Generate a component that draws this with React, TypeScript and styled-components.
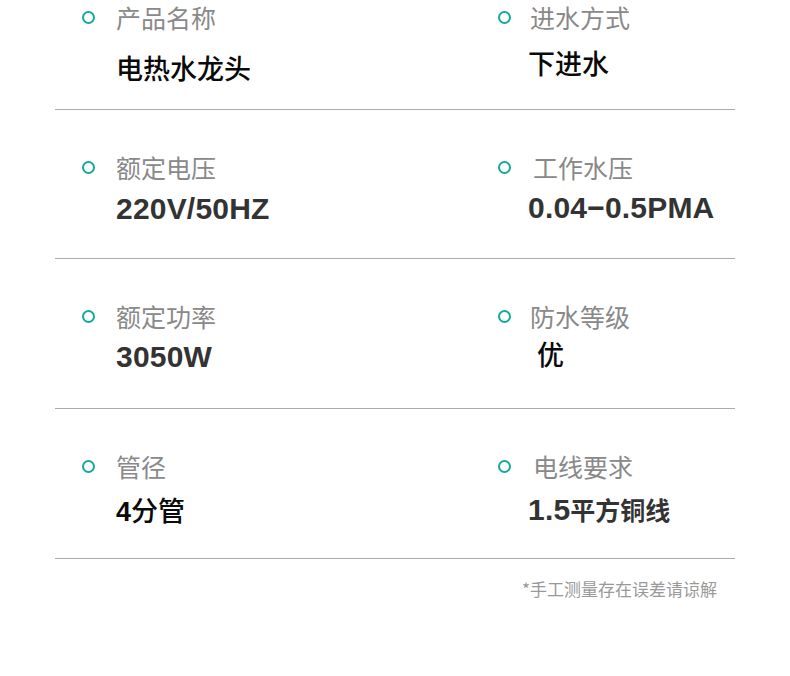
import React from "react";
import styled, { createGlobalStyle } from "styled-components";

const Global = createGlobalStyle`
  html, body { margin: 0; padding: 0; background: #fff; }
  body { font-family: "Liberation Sans", "Noto Sans CJK SC", sans-serif; }
`;

const Page = styled.div`
  width: 790px;
  height: 676px;
  background: #fff;
  overflow: hidden;
  padding-left: 55px;
  box-sizing: border-box;
`;

const Table = styled.div`
  width: 680px;
  display: flex;
  flex-direction: column;
`;

const Row = styled.div<{ $h: number; $pad: number }>`
  display: grid;
  grid-template-columns: 416px 1fr;
  height: ${(p) => p.$h}px;
  padding-top: ${(p) => p.$pad}px;
  box-sizing: border-box;
  border-bottom: 1px solid #ababab;
`;

const Cell = styled.div`
  padding-left: 27px;
  display: flex;
  flex-direction: column;
`;

const Head = styled.div`
  display: flex;
  align-items: center;
  height: 30px;
`;

const Dot = styled.span`
  width: 13px;
  height: 13px;
  border: 2.5px solid #14a99b;
  border-radius: 50%;
  box-sizing: border-box;
  flex: none;
`;

const Label = styled.span<{ $dx: number }>`
  margin-left: ${(p) => 21 + p.$dx}px;
  font-family: "Noto Sans CJK SC", sans-serif;
  font-size: 25px;
  line-height: 30px;
  color: #898989;
  white-space: nowrap;
`;

const Value = styled.div<{ $dx: number; $gap: number; $tone: "black" | "dark" }>`
  margin-left: ${(p) => 34 + p.$dx}px;
  margin-top: ${(p) => p.$gap}px;
  height: 40px;
  line-height: 40px;
  font-family: "Liberation Sans", "Noto Sans CJK SC", sans-serif;
  font-weight: ${(p) => (p.$tone === "dark" ? 700 : 500)};
  font-size: ${(p) => (p.$tone === "dark" ? 30 : 27)}px;
  letter-spacing: ${(p) => (p.$tone === "dark" ? 0.2 : 0)}px;
  color: ${(p) => (p.$tone === "dark" ? "#333" : "#0a0a0a")};
  white-space: nowrap;
`;

const Cjk = styled.span`
  font-size: 25px;
  letter-spacing: 0;
`;

const Digit = styled.span`
  font-weight: 700;
`;

const Note = styled.div`
  width: 680px;
  box-sizing: border-box;
  padding-right: 18px;
  margin-top: 18px;
  text-align: right;
  font-family: "Noto Sans CJK SC", sans-serif;
  font-size: 17px;
  line-height: 24px;
  color: #999;
`;

type Item = {
  label: string;
  value: React.ReactNode;
  tone: "black" | "dark";
  gap: number;
  ldx?: number;
  vdx?: number;
};

const rows: { h: number; pad: number; items: Item[] }[] = [
  {
    h: 110,
    pad: 2,
    items: [
      { label: "产品名称", value: "电热水龙头", tone: "black", gap: 18 },
      { label: "进水方式", value: "下进水", tone: "black", gap: 13, ldx: -2, vdx: -4 },
    ],
  },
  {
    h: 149,
    pad: 42,
    items: [
      { label: "额定电压", value: "220V/50HZ", tone: "dark", gap: 7 },
      { label: "工作水压", value: "0.04−0.5PMA", tone: "dark", gap: 6, ldx: 1, vdx: -4 },
    ],
  },
  {
    h: 150,
    pad: 42,
    items: [
      { label: "额定功率", value: "3050W", tone: "dark", gap: 6 },
      { label: "防水等级", value: "优", tone: "black", gap: 5, ldx: -2, vdx: 5 },
    ],
  },
  {
    h: 150,
    pad: 42,
    items: [
      {
        label: "管径",
        value: (
          <>
            <Digit>4</Digit>分管
          </>
        ),
        tone: "black",
        gap: 11,
      },
      {
        label: "电线要求",
        value: (
          <>
            1.5<Cjk>平方铜线</Cjk>
          </>
        ),
        tone: "dark",
        gap: 9,
        ldx: 1,
        vdx: -4,
      },
    ],
  },
];

export default function App() {
  return (
    <>
      <Global />
      <Page>
        <Table>
          {rows.map((r, i) => (
            <Row key={i} $h={r.h} $pad={r.pad}>
              {r.items.map((it) => (
                <Cell key={it.label}>
                  <Head>
                    <Dot />
                    <Label $dx={it.ldx ?? 0}>{it.label}</Label>
                  </Head>
                  <Value $dx={it.vdx ?? 0} $gap={it.gap} $tone={it.tone}>
                    {it.value}
                  </Value>
                </Cell>
              ))}
            </Row>
          ))}
        </Table>
        <Note>*手工测量存在误差请谅解</Note>
      </Page>
    </>
  );
}
